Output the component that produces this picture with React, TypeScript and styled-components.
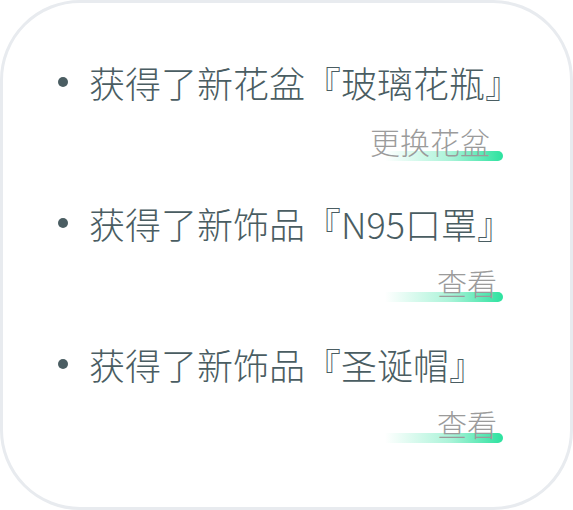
import React from "react"
import styled, { createGlobalStyle } from "styled-components"

const GlobalStyle = createGlobalStyle`
    html, body {
        margin: 0;
        padding: 0;
        background: #ffffff;
    }
    body {
        font-family: "Noto Sans CJK SC", "Noto Sans", sans-serif;
    }
`

const Card = styled.div`
    box-sizing: border-box;
    width: 573px;
    height: 510px;
    border: 3px solid #e8ebef;
    border-radius: 80px;
    background: #ffffff;
    padding: 59px 70px 0 55px;
    display: flex;
    flex-direction: column;
    gap: 46px;
`

const Item = styled.div`
    display: flex;
    flex-direction: column;
    gap: 23px;
`

const TitleRow = styled.div`
    display: flex;
    align-items: center;
    gap: 21px;
    height: 40px;
`

const Bullet = styled.span`
    width: 10px;
    height: 10px;
    border-radius: 50%;
    background: #4a5d62;
    flex-shrink: 0;
`

const Title = styled.span`
    font-size: 36px;
    font-weight: 300;
    line-height: 40px;
    color: #4a5d62;
    white-space: nowrap;
`

const ActionRow = styled.div`
    display: flex;
    justify-content: flex-end;
    height: 32px;
`

const Action = styled.a<{ $inset: number }>`
    position: relative;
    isolation: isolate;
    display: inline-block;
    font-size: 30px;
    font-weight: 300;
    line-height: 32px;
    color: #9b9b9b;
    text-decoration: none;
    cursor: pointer;
    padding-right: ${(p) => p.$inset}px;

    &::before {
        content: "";
        position: absolute;
        right: -3px;
        bottom: -4px;
        width: 118px;
        height: 10px;
        border-radius: 0 5px 5px 0;
        background: linear-gradient(to right, rgba(44, 226, 159, 0) 0%, rgba(44, 226, 159, 0.4) 55%, #2ce29f 100%);
        z-index: -1;
    }
`

const rewards = [
    { title: "获得了新花盆『玻璃花瓶』", action: "更换花盆", inset: 10 },
    { title: "获得了新饰品『N95口罩』", action: "查看", inset: 3 },
    { title: "获得了新饰品『圣诞帽』", action: "查看", inset: 3 },
]

const App: React.FC = () =>
{
    return (
        <>
            <GlobalStyle />
            <Card>
                {rewards.map((r) => (
                    <Item key={r.title}>
                        <TitleRow><Bullet /><Title>{r.title}</Title></TitleRow>
                        <ActionRow><Action $inset={r.inset}>{r.action}</Action></ActionRow>
                    </Item>
                ))}
            </Card>
        </>
    )
}

export default App
